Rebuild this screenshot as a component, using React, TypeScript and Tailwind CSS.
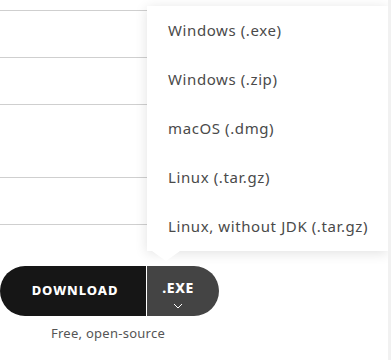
import React from 'react';

const options = [
  'Windows (.exe)',
  'Windows (.zip)',
  'macOS (.dmg)',
  'Linux (.tar.gz)',
  'Linux, without JDK (.tar.gz)',
];

export default function App() {
  return (
    <div
      className="relative w-[391px] h-[360px] bg-white overflow-hidden"
      style={{ fontFamily: '"Noto Sans", "Open Sans", sans-serif' }}
    >
      {/* page rows behind the menu */}
      <div className="flex flex-col">
        <div className="h-[11px] border-b border-[#cfcfcf]" />
        <div className="h-[47px] border-b border-[#cfcfcf]" />
        <div className="h-[47px] border-b border-[#cfcfcf]" />
        <div className="h-[73px] border-b border-[#cfcfcf]" />
        <div className="h-[47px] border-b border-[#cfcfcf]" />
      </div>

      <div className="mt-[41px] flex flex-col items-start">
        <div className="flex h-[50px]">
          <button className="w-[146px] h-full rounded-l-full bg-[#161616] text-white text-[13px] font-extrabold tracking-[0.07em] pl-[4px]">
            DOWNLOAD
          </button>
          <button className="ml-px w-[72px] h-full rounded-r-full bg-[#444444] text-white flex flex-col items-center justify-center pr-[10px]">
            <span className="text-[14px] font-extrabold tracking-[0.04em] leading-none mt-[8px]">.EXE</span>
            <svg width="10" height="6" viewBox="0 0 10 6" className="mt-[8px]">
              <path d="M1 1l4 4 4-4" fill="none" stroke="#ffffff" strokeWidth="1" />
            </svg>
          </button>
        </div>
        <p className="w-[216px] text-center text-[13px] text-[#555555] mt-[8px] tracking-[0.02em]">Free, open-source</p>
      </div>

      {/* dropdown menu */}
      <div className="absolute left-[147px] top-[6px] w-[241px] h-[245px] bg-white shadow-[0_2px_12px_rgba(0,0,0,0.12)]">
        <ul className="flex flex-col">
          {options.map((o) => (
            <li key={o} className="h-[49px] flex items-center pl-[21px] text-[15px] tracking-[0.04em] text-[#4a4a4a]">
              {o}
            </li>
          ))}
        </ul>
        <div className="absolute left-[5px] -bottom-[10px] w-0 h-0 border-l-[14px] border-r-[14px] border-t-[10px] border-l-transparent border-r-transparent border-t-white" />
      </div>

      {/* scrollbar strip */}
      <div className="absolute right-0 top-0 w-[3px] h-full bg-[#f1f1f1]" />
    </div>
  );
}
